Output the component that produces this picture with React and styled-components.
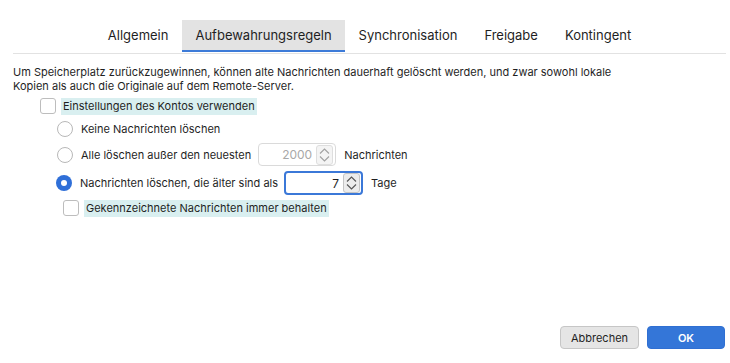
import React from "react";
import styled, { createGlobalStyle } from "styled-components";

const Global = createGlobalStyle`
  html, body { margin: 0; padding: 0; background: #fff; }
  body { font-family: Inter, "Liberation Sans", sans-serif; color: #1f1f1f; }
  #root { min-height: 100vh; }
`;

const Page = styled.div`
  height: 363px;
  display: flex;
  flex-direction: column;
  box-sizing: border-box;
`;

const TabBar = styled.div`
  margin: 20px 4px 0 13px;
  display: flex;
  justify-content: center;
  border-bottom: 1px solid #e2e2e2;
`;

const Tabs = styled.div`
  display: flex;
  gap: 1px;
`;

const Tab = styled.div`
  height: 30px;
  padding: 0 13px;
  display: flex;
  align-items: center;
  font-size: 13px;
  color: #1f1f1f;
  background: ${(p) => (p.$active ? "#e3e3e3" : "transparent")};
  border-bottom: 2px solid ${(p) => (p.$active ? "#3d7bd8" : "transparent")};
  margin-bottom: 1px;
`;

const Desc = styled.p`
  margin: 11px 0 0 13px;
  font-size: 11px;
  line-height: 14px;
  color: #1f1f1f;
  white-space: nowrap;
`;

const Options = styled.div`
  display: flex;
  flex-direction: column;
  gap: 5px;
  margin-top: 5px;
`;

const Row = styled.div`
  display: flex;
  align-items: center;
  height: ${(p) => p.$h}px;
  padding-left: ${(p) => p.$indent}px;
  font-size: 11px;
  color: #1f1f1f;
`;

const Check = styled.span`
  width: 14px;
  height: 14px;
  border: 1px solid #bdbdbd;
  border-radius: 3px;
  background: #fff;
  flex: none;
`;

const Highlight = styled.span`
  margin-left: 5px;
  background: #d9eff0;
  padding: 1px 2px;
  line-height: 15px;
`;

const Radio = styled.span`
  width: ${(p) => (p.$checked ? 16 : 14)}px;
  height: ${(p) => (p.$checked ? 16 : 14)}px;
  border-radius: 50%;
  border: ${(p) => (p.$checked ? "none" : "1px solid #b8b8b8")};
  background: ${(p) => (p.$checked ? "#2f6fd8" : "#fff")};
  display: flex;
  align-items: center;
  justify-content: center;
  flex: none;
  margin-right: 8px;
  &::after {
    content: "";
    display: ${(p) => (p.$checked ? "block" : "none")};
    width: 6px;
    height: 6px;
    border-radius: 50%;
    background: #fff;
  }
`;

const Spin = styled.div`
  box-sizing: border-box;
  width: ${(p) => (p.$focus ? 79 : 78)}px;
  height: ${(p) => (p.$focus ? 24 : 23)}px;
  margin: 0 8px 0 ${(p) => p.$ml}px;
  border: ${(p) => (p.$focus ? "2px solid #3b78d8" : "1px solid #dadada")};
  border-radius: 4px;
  display: flex;
  align-items: center;
  justify-content: flex-end;
  padding-right: ${(p) => (p.$focus ? 1 : 2)}px;
  background: #fff;
`;

const SpinValue = styled.span`
  font-size: 12px;
  color: ${(p) => (p.$disabled ? "#a8a8a8" : "#1f1f1f")};
  margin-right: 4px;
`;

const Stepper = styled.span`
  width: 17px;
  height: 20px;
  border: 1px solid #c4c4c4;
  border-radius: 3px;
  background: #ececec;
  box-sizing: border-box;
  display: flex;
  align-items: center;
  justify-content: center;
  opacity: ${(p) => (p.$disabled ? 0.55 : 1)};
`;

const StepperSvg = () => (
  <svg width="15" height="18" viewBox="0 0 15 18">
    <path d="M3 7.5 L7.5 3 L12 7.5" fill="none" stroke="#555" strokeWidth="1.1" />
    <path d="M3 10.5 L7.5 15 L12 10.5" fill="none" stroke="#555" strokeWidth="1.1" />
  </svg>
);

const Footer = styled.div`
  margin-top: auto;
  display: flex;
  justify-content: flex-end;
  gap: 8px;
  padding: 0 5px 14px 0;
`;

const Button = styled.button`
  width: ${(p) => p.$w}px;
  height: 23px;
  border-radius: 4px;
  font-family: Inter, "Liberation Sans", sans-serif;
  font-size: 11px;
  border: 1px solid ${(p) => (p.$primary ? "#2f6fd2" : "#c6c6c6")};
  background: ${(p) => (p.$primary ? "#3476d8" : "#e5e5e5")};
  color: ${(p) => (p.$primary ? "#fff" : "#1f1f1f")};
  font-weight: ${(p) => (p.$primary ? 600 : 400)};
  padding: 0;
`;

export default function App() {
  return (
    <Page>
      <Global />
      <TabBar>
        <Tabs>
          <Tab>Allgemein</Tab>
          <Tab $active>Aufbewahrungsregeln</Tab>
          <Tab>Synchronisation</Tab>
          <Tab>Freigabe</Tab>
          <Tab>Kontingent</Tab>
        </Tabs>
      </TabBar>
      <Desc>
        Um Speicherplatz zurückzugewinnen, können alte Nachrichten dauerhaft gelöscht werden, und zwar sowohl lokale
        <br />
        Kopien als auch die Originale auf dem Remote-Server.
      </Desc>
      <Options>
        <Row $h={16} $indent={40}>
          <Check />
          <Highlight>Einstellungen des Kontos verwenden</Highlight>
        </Row>
        <Row $h={19} $indent={57}>
          <Radio />
          Keine Nachrichten löschen
        </Row>
        <Row $h={23} $indent={57}>
          <Radio />
          Alle löschen außer den neuesten
          <Spin $ml={7}>
            <SpinValue $disabled>2000</SpinValue>
            <Stepper $disabled>
              <StepperSvg />
            </Stepper>
          </Spin>
          Nachrichten
        </Row>
        <Row $h={24} $indent={56}>
          <Radio $checked />
          Nachrichten löschen, die älter sind als
          <Spin $ml={6} $focus>
            <SpinValue>7</SpinValue>
            <Stepper>
              <StepperSvg />
            </Stepper>
          </Spin>
          Tage
        </Row>
        <Row $h={16} $indent={63}>
          <Check />
          <Highlight>Gekennzeichnete Nachrichten immer behalten</Highlight>
        </Row>
      </Options>
      <Footer>
        <Button $w={79}>Abbrechen</Button>
        <Button $w={78} $primary>OK</Button>
      </Footer>
    </Page>
  );
}
